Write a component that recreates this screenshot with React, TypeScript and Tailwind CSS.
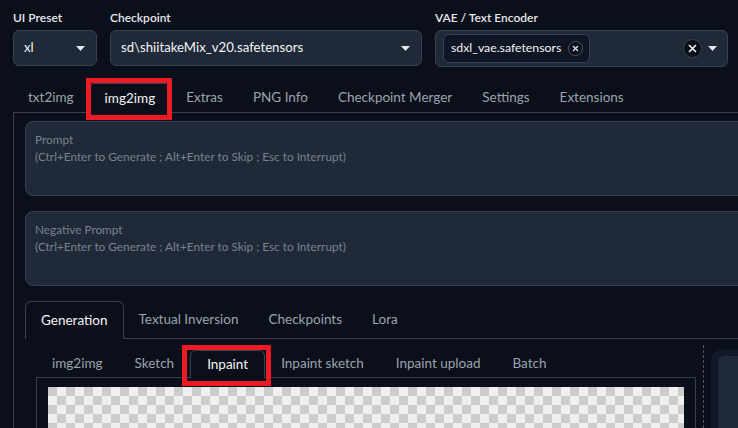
import { FC, ReactNode } from "react";

const Caret: FC = () => (
  <svg width="9" height="5" viewBox="0 0 9 5" className="shrink-0">
    <path d="M0 0h9L4.5 5z" fill="#e5e7eb" />
  </svg>
);

const RedMark: FC<{ className: string }> = ({ className }) => (
  <div
    className={`pointer-events-none absolute border-[5px] border-[#ed1c24] ${className}`}
  />
);

interface ITabProps {
  label: string;
  active?: boolean;
  mark?: string;
  height: string;
  pad: string;
}

const Tab: FC<ITabProps> = ({ label, active, mark, height, pad }) => {
  if (active) {
    return (
      <div
        className={`relative flex items-center ${pad} ${height} rounded-t-md border border-b-0 border-[#374151] bg-[#0b0f19] text-[#f3f4f6]`}
      >
        {label}
        {mark && <RedMark className={mark} />}
      </div>
    );
  }
  return (
    <div
      className={`flex items-center ${pad} ${height} border-b border-[#374151] text-[#9ca3af]`}
    >
      {label}
    </div>
  );
};

const Field: FC<{ label: string; width: string; children: ReactNode }> = ({
  label,
  width,
  children,
}) => (
  <div className={`flex flex-col ${width}`}>
    <span className="mb-1 h-4 text-[12px] leading-4 font-semibold text-[#e5e7eb]">
      {label}
    </span>
    {children}
  </div>
);

const PromptBox: FC<{ title: string }> = ({ title }) => (
  <div className="h-[75px] rounded-lg border border-[#374151] bg-[#1f2937] px-[9px] pt-[9px] text-[11.8px] leading-[17px] text-[#7a8290]">
    <p>{title}</p>
    <p>(Ctrl+Enter to Generate ; Alt+Enter to Skip ; Esc to Interrupt)</p>
  </div>
);

export default function App() {
  const mainTabs = [
    "txt2img",
    "img2img",
    "Extras",
    "PNG Info",
    "Checkpoint Merger",
    "Settings",
    "Extensions",
  ];
  const genTabs = ["Generation", "Textual Inversion", "Checkpoints", "Lora"];
  const subTabs = [
    "img2img",
    "Sketch",
    "Inpaint",
    "Inpaint sketch",
    "Inpaint upload",
    "Batch",
  ];

  return (
    <div className="h-[428px] w-[738px] overflow-hidden bg-[#0b0f19] font-['Lato','Liberation_Sans',sans-serif] text-[13.5px]">
      <div className="w-[800px]">
        {/* top selectors */}
        <div className="flex gap-[13px] px-[13px] pt-[10px]">
          <Field label="UI Preset" width="w-[84px]">
            <div className="flex h-[36px] items-center justify-between rounded-md border border-[#374151] bg-[#1f2937] pl-[10px] pr-[11px] text-[13.2px] text-[#f3f4f6]">
              <span>xl</span>
              <Caret />
            </div>
          </Field>
          <Field label="Checkpoint" width="w-[312px]">
            <div className="flex h-[36px] items-center justify-between rounded-md border border-[#374151] bg-[#1f2937] pl-[10px] pr-[11px] text-[13.2px] text-[#f3f4f6]">
              <span>sd\shiitakeMix_v20.safetensors</span>
              <Caret />
            </div>
          </Field>
          <Field label="VAE / Text Encoder" width="w-[293px]">
            <div className="flex h-[37px] items-center rounded-md border border-[#374151] bg-[#1f2937] pl-[7px] pr-[10px] text-[#f3f4f6]">
              <div className="flex h-[29px] items-center gap-[7px] rounded-md border border-[#374151] bg-[#0f1522] pl-[7px] pr-[6px] text-[12.3px]">
                <span>sdxl_vae.safetensors</span>
                <span className="flex h-[15px] w-[15px] items-center justify-center rounded-full border border-[#4b5563] bg-[#0b0f19]">
                  <svg width="7" height="7" viewBox="0 0 7 7">
                    <path d="M1 1l5 5M6 1L1 6" stroke="#e5e7eb" strokeWidth="1.2" />
                  </svg>
                </span>
              </div>
              <div className="flex-1" />
              <span className="mr-[6px] flex h-[19px] w-[19px] items-center justify-center rounded-full border border-[#374151] bg-[#0b0f19]">
                <svg width="9" height="9" viewBox="0 0 9 9">
                  <path d="M1 1l7 7M8 1L1 8" stroke="#f3f4f6" strokeWidth="1.6" />
                </svg>
              </span>
              <Caret />
            </div>
          </Field>
        </div>

        {/* main tabs */}
        <div className="mt-[16px] flex pl-[13px]">
          {mainTabs.map((t) => (
            <Tab
              key={t}
              label={t}
              pad="px-[15px]"
              height="h-[30px]"
              active={t === "img2img"}
              mark="-left-[4px] -right-[2px] -top-[6px] -bottom-[7px]"
            />
          ))}
          <div className="flex-1 border-b border-[#374151]" />
        </div>

        {/* img2img panel */}
        <div className="ml-[13px] border-l border-[#374151] pl-[11px] pt-[8px]">
          <PromptBox title="Prompt" />
          <div className="mt-[15px]">
            <PromptBox title="Negative Prompt" />
          </div>

          {/* generation tabs */}
          <div className="mt-[15px] flex">
            {genTabs.map((t) => (
              <Tab
                key={t}
                label={t}
                pad="px-[15px]"
                height="h-[38px]"
                active={t === "Generation"}
              />
            ))}
            <div className="flex-1 border-b border-[#374151]" />
          </div>

          <div className="flex pl-[11px]">
            <div className="w-[660px] pt-[11px]">
              <div className="flex">
                {subTabs.map((t) => (
                  <Tab
                    key={t}
                    label={t}
                    pad="px-4"
                    height="h-[28px]"
                    active={t === "Inpaint"}
                    mark="-left-[9px] -right-[7px] -top-[6px] -bottom-[8px]"
                  />
                ))}
                <div className="flex-1 border-b border-[#374151]" />
              </div>
              <div className="h-[60px] border-x border-[#374151] px-[11px] pt-[9px]">
                <div className="h-full bg-[image:conic-gradient(#efefef_25%,#cccccc_0_50%,#efefef_0_75%,#cccccc_0)] bg-[length:18px_18px]" />
              </div>
            </div>
            <div className="mx-[7px] mt-[6px] border-l border-dashed border-[#4b5563]" />
            <div className="mt-[10px] flex-1 rounded-t-xl bg-[#111827] px-[7px] pt-[7px]">
              <div className="h-[80px] rounded-t-md bg-[#1f2937]" />
            </div>
          </div>
        </div>
      </div>
    </div>
  );
}
